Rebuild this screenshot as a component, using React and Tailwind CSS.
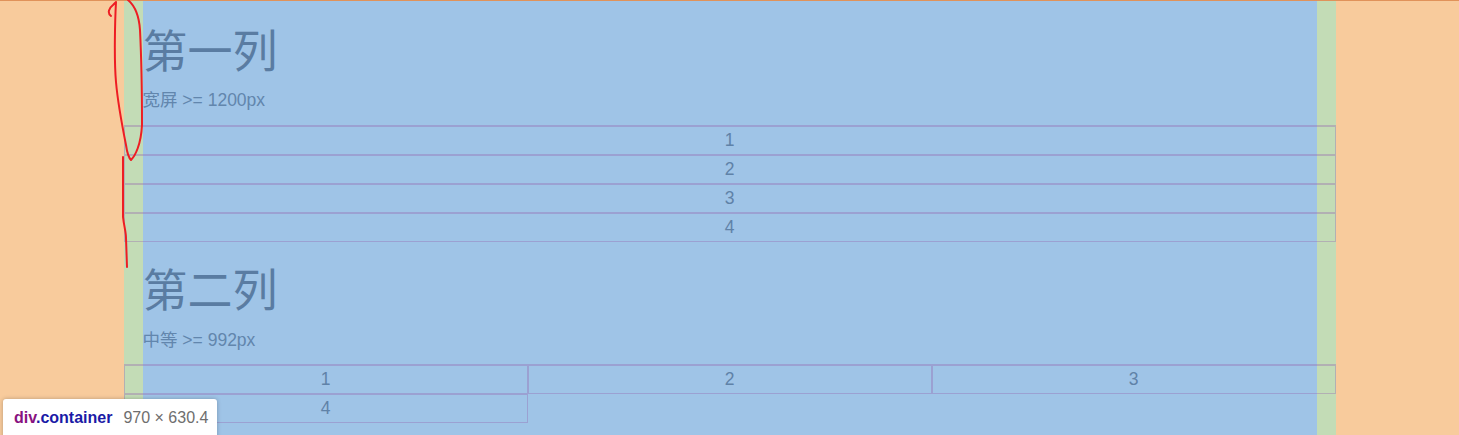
import React from "react";

const FONT = "font-['Liberation_Sans','Noto_Sans_CJK_SC',sans-serif]";
const CELL =
  "h-[29px] border border-[rgba(150,100,175,0.36)] text-center text-[17.5px] leading-[27px] text-[#5f82a8]";

function Section({ title, note, children, top, noteGap, rowGap }) {
  return (
    <div>
      <h1 className={`${top} text-[45px] font-normal leading-[50px] text-[#5a7ca2]`}>{title}</h1>
      <p className={`${noteGap} text-[17.5px] leading-[25px] text-[#6286ad]`}>{note}</p>
      <div className={`-mx-[19px] ${rowGap} border-t border-[rgba(150,100,175,0.36)]`}>{children}</div>
    </div>
  );
}

function Annotation() {
  return (
    <svg className="pointer-events-none absolute left-0 top-0 h-full w-full" viewBox="0 0 1459 435">
      <g fill="none" stroke="#ee1d23" strokeWidth="2" strokeLinecap="round" strokeLinejoin="round">
        <path d="M111 16 C107 13 109 8 113 5 C114 4 115 3 116 2 C115 20 114 60 116 82 C118 105 122 125 126 145 C127 152 129 158 131 160 C135 156 141 145 142 125 C142 90 141 50 140 30 C139 15 134 5 128 0" />
        <path d="M123 157 L123 217 C124 226 126 232 126 238 L127 267" />
      </g>
    </svg>
  );
}

export default function App() {
  return (
    <div className={`relative h-[435px] w-full overflow-hidden bg-[#f8cb9c] ${FONT}`}>
      <div className="mx-auto h-[600px] w-[1212px] border-x-[19px] border-[#c3dcb6] bg-[#9fc4e7]">
        <Section title="第一列" note="宽屏 >= 1200px" top="pt-[28px]" noteGap="mt-[10px]" rowGap="mt-[12px]">
          {["1", "2", "3", "4"].map((n) => (
            <div key={n} className={CELL}>
              {n}
            </div>
          ))}
        </Section>
        <Section title="第二列" note="中等 >= 992px" top="pt-[25px]" noteGap="mt-[11px]" rowGap="mt-[11px]">
          <div className="grid grid-cols-3">
            {["1", "2", "3", "4"].map((n) => (
              <div key={n} className={CELL}>
                {n}
              </div>
            ))}
          </div>
        </Section>
      </div>

      <div className="absolute left-0 top-0 h-px w-full bg-[#e0925a]" />

      <Annotation />

      <div className="absolute left-[3px] top-[399px] flex h-[50px] w-[214px] items-start whitespace-nowrap rounded-[3px] bg-white pl-[11px] pt-[9px] shadow-[0_0_4px_rgba(0,0,0,0.25)]">
        <span className="shrink-0 text-[16px] font-bold leading-[20px]">
          <span className="text-[#881280]">div</span>
          <span className="text-[#1a1aa6]">.container</span>
        </span>
        <span className="ml-[11px] shrink-0 text-[16px] leading-[20px] text-[#6e6e6e]">970 × 630.4</span>
      </div>
    </div>
  );
}
